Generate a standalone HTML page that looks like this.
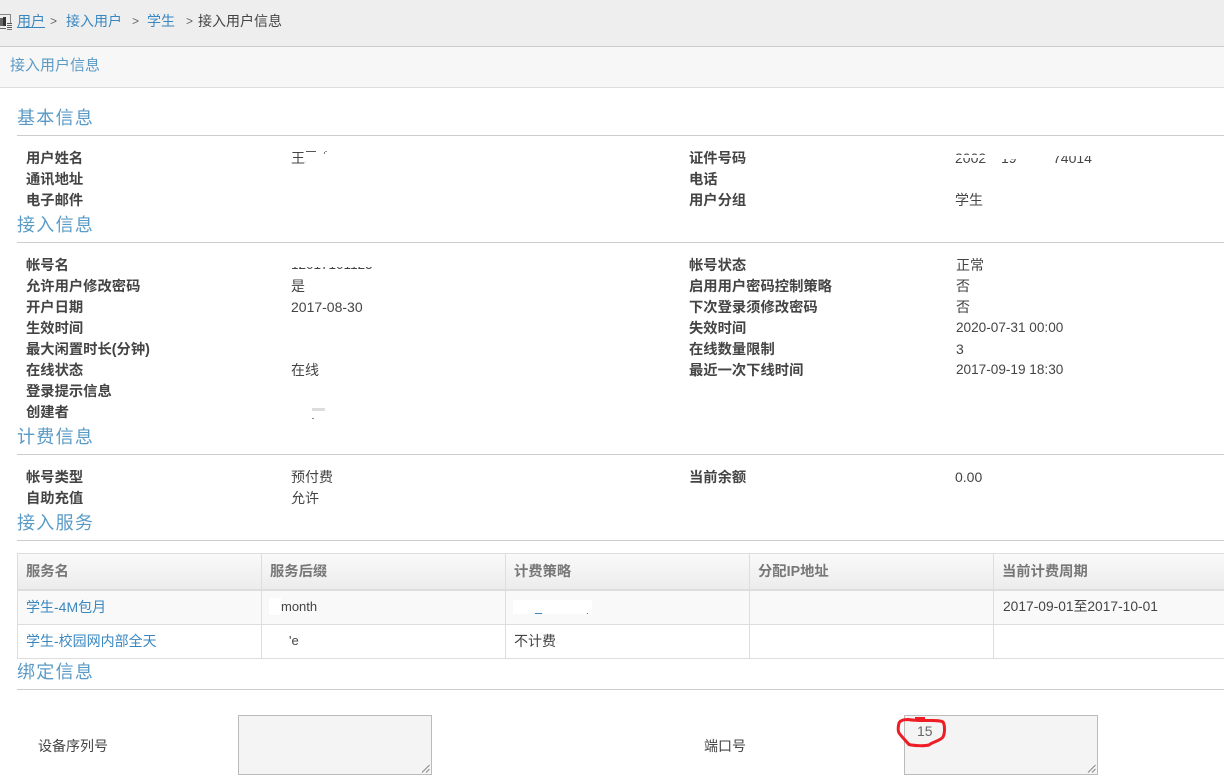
<!DOCTYPE html>
<html lang="zh">
<head>
<meta charset="utf-8">
<title>接入用户信息</title>
<style>
html,body{margin:0;padding:0;background:#fff;}
body{width:1224px;height:781px;position:relative;overflow:hidden;font-family:"Liberation Sans","Noto Sans CJK SC",sans-serif;font-size:14px;color:#444;}
.a{position:absolute;white-space:nowrap;line-height:20px;}
.b{font-weight:bold;color:#444;font-size:14.3px;margin-top:1px;}
.l{left:26px;}
.v{left:291px;}
.r{left:689px;}
.w{left:955px;}
.h{position:absolute;left:17px;font-size:18px;line-height:24px;color:#5a9ac6;letter-spacing:1.3px;white-space:nowrap;}
.ln{position:absolute;left:17px;right:0;height:1px;background:#ccc;}
.lk{color:#3a87c0;}
.bx{position:absolute;background:#ddd;}
.th{font-weight:bold;color:#777;font-size:14.3px;margin-top:1px;}
.ta{position:absolute;box-sizing:border-box;background:#f4f4f4;border:1px solid #bbb;}
.mask{position:absolute;background:#fff;}
</style>
</head>
<body>
<!-- top bars -->
<div style="position:absolute;left:0;top:0;width:1224px;height:46px;background:#eee;"></div>
<div style="position:absolute;left:0;top:46px;width:1224px;height:1px;background:#ccc;"></div>
<div style="position:absolute;left:0;top:47px;width:1224px;height:40px;background:#f7f7f7;"></div>
<div style="position:absolute;left:0;top:87px;width:1224px;height:1px;background:#ddd;"></div>

<svg style="position:absolute;left:0;top:13px;" width="14" height="19" viewBox="0 0 14 19">
<path d="M0 1.500H10.500V10" fill="none" stroke="#888" stroke-width="1"/>
<rect x="0" y="5" width="3" height="8" fill="#666"/>
<rect x="3" y="4" width="3" height="9" fill="#333"/>
<rect x="0" y="15" width="6" height="1" fill="#666"/>
<rect x="7" y="10" width="5" height="1" fill="#555"/>
<rect x="7" y="12" width="5" height="1" fill="#666"/>
<rect x="7" y="14" width="5" height="1" fill="#555"/>
<rect x="7" y="16" width="5" height="1" fill="#777"/>
</svg>

<span class="a lk" style="left:17px;top:11px;text-decoration:underline;">用户</span>
<span class="a" style="left:50px;top:11px;color:#666;font-size:12px;">&gt;</span>
<span class="a lk" style="left:66px;top:11px;">接入用户</span>
<span class="a" style="left:132px;top:11px;color:#666;font-size:12px;">&gt;</span>
<span class="a lk" style="left:147px;top:11px;">学生</span>
<span class="a" style="left:186px;top:11px;color:#666;font-size:12px;">&gt;</span>
<span class="a" style="left:198px;top:11px;">接入用户信息</span>
<span class="a lk" style="left:10px;top:56px;color:#5a9ac6;font-size:15px;">接入用户信息</span>

<!-- 基本信息 -->
<div class="h" style="top:106px;">基本信息</div>
<div class="ln" style="top:135px;"></div>
<span class="a b l" style="top:148px;">用户姓名</span>
<span class="a b l" style="top:169px;">通讯地址</span>
<span class="a b l" style="top:190px;">电子邮件</span>
<span class="a v" style="top:148px;">王二小</span>
<div class="mask" style="left:306px;top:152px;width:30px;height:16px;"></div>
<div style="position:absolute;left:306px;top:151px;width:10px;height:1px;background:#555;"></div>
<div style="position:absolute;left:324px;top:152px;width:1px;height:2px;background:#777;"></div>
<span class="a b r" style="top:148px;">证件号码</span>
<span class="a b r" style="top:169px;">电话</span>
<span class="a b r" style="top:190px;">用户分组</span>
<span class="a w" style="top:148px;clip-path:inset(0 0 4px 0);">2002</span>
<div class="mask" style="left:955px;top:155px;width:32px;height:3px;"></div>
<span class="a" style="left:1001px;top:148px;clip-path:inset(11px 0 4px 0);">19</span>
<span class="a" style="left:1053px;top:148px;clip-path:inset(8px 0 4px 0);">74014</span>
<span class="a w" style="top:190px;">学生</span>

<!-- 接入信息 -->
<div class="h" style="top:213px;">接入信息</div>
<div class="ln" style="top:242px;"></div>
<span class="a b l" style="top:255px;">帐号名</span>
<span class="a b l" style="top:276px;">允许用户修改密码</span>
<span class="a b l" style="top:297px;">开户日期</span>
<span class="a b l" style="top:318px;">生效时间</span>
<span class="a b l" style="top:339px;">最大闲置时长(分钟)</span>
<span class="a b l" style="top:360px;">在线状态</span>
<span class="a b l" style="top:381px;">登录提示信息</span>
<span class="a b l" style="top:402px;">创建者</span>
<span class="a v" style="top:255px;font-size:13.500px;clip-path:inset(12px 0 4px 0);">12017101125</span>
<span class="a v" style="top:276px;">是</span>
<span class="a v" style="top:297px;">2017-08-30</span>
<span class="a v" style="top:360px;">在线</span>
<div style="position:absolute;left:312px;top:408px;width:13px;height:3px;background:#ddd;"></div>
<div style="position:absolute;left:312px;top:418px;width:2px;height:1px;background:#888;"></div>
<span class="a b r" style="top:255px;">帐号状态</span>
<span class="a b r" style="top:276px;">启用用户密码控制策略</span>
<span class="a b r" style="top:297px;">下次登录须修改密码</span>
<span class="a b r" style="top:318px;">失效时间</span>
<span class="a b r" style="top:339px;">在线数量限制</span>
<span class="a b r" style="top:360px;">最近一次下线时间</span>
<span class="a" style="left:956px;top:255px;">正常</span>
<span class="a" style="left:956px;top:276px;">否</span>
<span class="a" style="left:956px;top:297px;">否</span>
<span class="a" style="left:956px;top:318px;font-size:13.600px;">2020-07-31 00:00</span>
<span class="a" style="left:956px;top:339px;">3</span>
<span class="a" style="left:956px;top:360px;font-size:13.600px;">2017-09-19 18:30</span>

<!-- 计费信息 -->
<div class="h" style="top:425px;">计费信息</div>
<div class="ln" style="top:454px;"></div>
<span class="a b l" style="top:467px;">帐号类型</span>
<span class="a b l" style="top:488px;">自助充值</span>
<span class="a v" style="top:467px;">预付费</span>
<span class="a v" style="top:488px;">允许</span>
<span class="a b r" style="top:467px;">当前余额</span>
<span class="a w" style="top:467px;">0.00</span>

<!-- 接入服务 -->
<div class="h" style="top:511px;">接入服务</div>
<div class="ln" style="top:540px;"></div>

<div style="position:absolute;left:17px;top:553px;width:1207px;height:36px;background:linear-gradient(#fafafa,#ececec);"></div>
<div style="position:absolute;left:17px;top:591px;width:1207px;height:33px;background:#f9f9f9;"></div>
<div class="bx" style="left:17px;top:553px;width:1207px;height:1px;"></div>
<div class="bx" style="left:17px;top:589px;width:1207px;height:2px;"></div>
<div class="bx" style="left:17px;top:624px;width:1207px;height:1px;"></div>
<div class="bx" style="left:17px;top:658px;width:1207px;height:1px;"></div>
<div class="bx" style="left:17px;top:553px;width:1px;height:106px;"></div>
<div class="bx" style="left:261px;top:553px;width:1px;height:106px;"></div>
<div class="bx" style="left:505px;top:553px;width:1px;height:106px;"></div>
<div class="bx" style="left:749px;top:553px;width:1px;height:106px;"></div>
<div class="bx" style="left:993px;top:553px;width:1px;height:106px;"></div>

<span class="a th" style="left:26px;top:561px;">服务名</span>
<span class="a th" style="left:270px;top:561px;">服务后缀</span>
<span class="a th" style="left:514px;top:561px;">计费策略</span>
<span class="a th" style="left:758px;top:561px;">分配IP地址</span>
<span class="a th" style="left:1002px;top:561px;">当前计费周期</span>

<span class="a lk" style="left:26px;top:597px;">学生-4M包月</span>
<div class="mask" style="left:269px;top:598px;width:12px;height:17px;"></div>
<span class="a" style="left:281px;top:597px;font-size:13px;">month</span>
<div class="mask" style="left:513px;top:600px;width:79px;height:14px;"></div>
<div style="position:absolute;left:535px;top:613px;width:7px;height:1px;background:#3a87c0;"></div>
<div style="position:absolute;left:587px;top:613px;width:1px;height:1px;background:#3a87c0;"></div>
<span class="a" style="left:1003px;top:597px;font-size:13.800px;">2017-09-01至2017-10-01</span>

<span class="a lk" style="left:26px;top:631px;">学生-校园网内部全天</span>
<span class="a" style="left:289px;top:631px;font-size:13px;">'e</span>
<span class="a" style="left:514px;top:631px;">不计费</span>

<!-- 绑定信息 -->
<div class="h" style="top:660px;">绑定信息</div>
<div class="ln" style="top:689px;"></div>

<span class="a" style="left:38px;top:736px;">设备序列号</span>
<div class="ta" style="left:238px;top:715px;width:194px;height:60px;"></div>
<svg style="position:absolute;left:421px;top:764px;" width="10" height="10" viewBox="0 0 10 10">
<path d="M1 8.500L8.500 1M5 8.500L8.500 5" stroke="#888" stroke-width="1" fill="none"/>
</svg>

<span class="a" style="left:704px;top:736px;">端口号</span>
<div class="ta" style="left:904px;top:715px;width:194px;height:60px;"></div>
<svg style="position:absolute;left:1087px;top:764px;" width="10" height="10" viewBox="0 0 10 10">
<path d="M1 8.500L8.500 1M5 8.500L8.500 5" stroke="#888" stroke-width="1" fill="none"/>
</svg>
<span class="a" style="left:917px;top:721px;color:#666;">15</span>
<svg style="position:absolute;left:890px;top:710px;" width="64" height="44" viewBox="0 0 64 44">
<path d="M18 9.500C13 9.500 10 11 9 13C8 17 8 21 9 23C12 27 15 30 19 34.500C25 36 35 36 39 35C42 32 50 31 53 27C55 23 55 15 53 12C50 10 42 10.500 35 10.500C29 10.500 24 10.500 18 9.500Z" fill="none" stroke="#ee1c25" stroke-width="3"/>
<path d="M25 7H35V10H25Z" fill="#ee1c25"/>
</svg>
</body>
</html>
